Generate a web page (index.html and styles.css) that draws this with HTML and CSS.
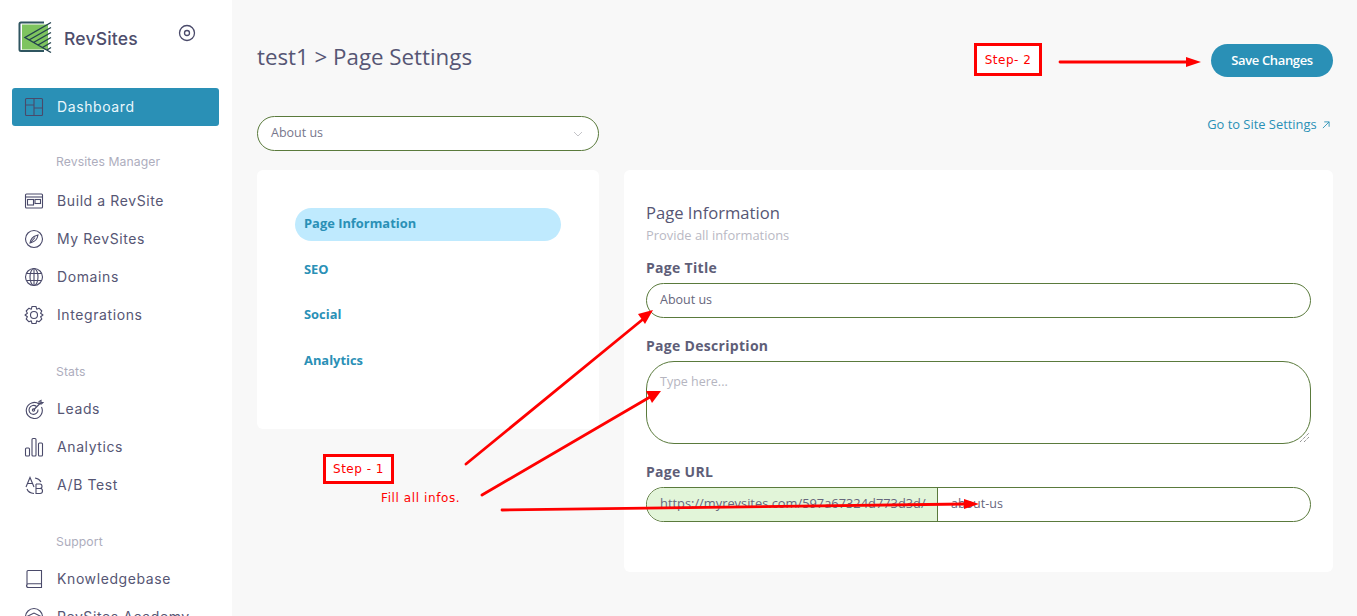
FILE: index.html
```html
<!DOCTYPE html>
<html lang="en">
<head>
<meta charset="utf-8">
<title>Page Settings</title>
<link rel="stylesheet" href="styles.css">
</head>
<body>
<div class="app">
  <aside class="sidebar">
    <div class="brand">
      <svg class="logo" width="34" height="33" viewBox="0 0 34 33">
        <path d="M26 1.500H3Q1.500 1.500 1.500 3V28.500Q1.500 30 3 30H26" fill="none" stroke="#2f5560" stroke-width="2"/>
        <path d="M4 3.500H30V28.500H4Z" fill="#7ec45f"/>
        <path d="M33 1.500L7 16.500L33 31.500M11 19L33 6.500M15.500 21.500L33 11.500M20 24L33 16.500M24.500 26.500L33 21.500M29 29L33 26.500" fill="none" stroke="#22424e" stroke-width="1.400"/>
      </svg>
      <span class="brand-name">RevSites</span>
      <svg class="target" width="18" height="18" viewBox="0 0 18 18" fill="none" stroke="#4a4a6a"><circle cx="9" cy="9" r="7.500" stroke-width="1.300"/><circle cx="9" cy="9" r="2.500" stroke-width="1.300"/></svg>
    </div>
    <a class="nav-item active">
      <svg class="ico" viewBox="0 0 20 20" fill="none" stroke="#4a4a6a" stroke-width="1.100"><rect x="1.500" y="1.500" width="17" height="17" rx="1"/><path d="M10 1.500V18.500M1.500 8H10M10 11H18.500"/></svg>
      Dashboard
    </a>
    <div class="nav-head first">Revsites Manager</div>
    <a class="nav-item">
      <svg class="ico" viewBox="0 0 20 20" fill="none" stroke="#4a4a6a" stroke-width="1.100"><rect x="1.500" y="3" width="17" height="14" rx="1"/><path d="M1.500 6H18.500"/><rect x="3.500" y="8.500" width="6" height="5.500"/><rect x="11" y="8.500" width="5.500" height="4"/></svg>
      Build a RevSite
    </a>
    <a class="nav-item">
      <svg class="ico" viewBox="0 0 20 20" fill="none" stroke="#4a4a6a" stroke-width="1.100"><circle cx="10" cy="10" r="8.500"/><path d="M14 6Q13 12 7.500 13.500L6 14Q7 8 12.500 6.500Z"/><path d="M6.500 13.500L11 8.500"/></svg>
      My RevSites
    </a>
    <a class="nav-item">
      <svg class="ico" viewBox="0 0 20 20" fill="none" stroke="#4a4a6a" stroke-width="1.100"><circle cx="10" cy="10" r="8.500"/><ellipse cx="10" cy="10" rx="4" ry="8.500"/><path d="M2.500 6.500H17.500M2.500 13.500H17.500M10 1.500V18.500"/></svg>
      Domains
    </a>
    <a class="nav-item">
      <svg class="ico" viewBox="0 0 20 20" fill="none" stroke="#4a4a6a" stroke-width="1.100"><circle cx="10" cy="10" r="3.500"/><path d="M8 1.500H12L12.700 4.200L15 3.200L17.800 6L16.600 8.300L19 10L16.600 11.700L17.800 14L15 16.800L12.700 15.800L12 18.500H8L7.300 15.800L5 16.800L2.200 14L3.400 11.700L1 10L3.400 8.300L2.200 6L5 3.200L7.300 4.200Z" stroke-linejoin="round"/></svg>
      Integrations
    </a>
    <div class="nav-head">Stats</div>
    <a class="nav-item">
      <svg class="ico" viewBox="0 0 20 20" fill="none" stroke="#4a4a6a" stroke-width="1.100"><path d="M15 5A8 8 0 1 0 17.500 8"/><path d="M12.500 7.500A4.500 4.500 0 1 0 14 10.500"/><circle cx="9.500" cy="11" r="1.200"/><path d="M9.500 11L17 3.500M15 2.500V5H17.500L19 3.500H17V1.500Z"/></svg>
      Leads
    </a>
    <a class="nav-item">
      <svg class="ico" viewBox="0 0 20 20" fill="none" stroke="#4a4a6a" stroke-width="1.100"><rect x="1.500" y="11" width="4" height="8" rx="1"/><rect x="8" y="1.500" width="4" height="17.500" rx="1"/><rect x="14.500" y="6" width="4" height="13" rx="1"/></svg>
      Analytics
    </a>
    <a class="nav-item">
      <svg class="ico" viewBox="0 0 20 20" fill="none" stroke="#4a4a6a" stroke-width="1.100"><path d="M2 12L6 2.500L10 12M3.500 8.500H8.500"/><path d="M12 9H16Q18 9 18 11.500Q18 13.500 16 13.500H12M12 13.500H16.500Q18.500 13.500 18.500 16Q18.500 18.500 16 18.500H12ZM12 9V18.500"/><path d="M3 14Q4.500 18 10 18.500M11 3Q15 3.500 17 7"/></svg>
      A/B Test
    </a>
    <div class="nav-head">Support</div>
    <a class="nav-item">
      <svg class="ico" viewBox="0 0 20 20" fill="none" stroke="#4a4a6a" stroke-width="1.100"><path d="M3 16.500V2.500Q3 1.500 4 1.500H17.500V18.500H4.500Q2.500 18.500 2.500 16.500Q2.500 14.800 4.500 14.800H17.500"/></svg>
      Knowledgebase
    </a>
    <a class="nav-item">
      <svg class="ico" viewBox="0 0 20 20" fill="none" stroke="#4a4a6a" stroke-width="1.100"><circle cx="10" cy="10" r="8.500"/><path d="M4 9L10 6L16 9L10 12Z"/></svg>
      RevSites Academy
    </a>
  </aside>

  <main class="main">
    <header class="page-head">
      <h1 class="page-title">test1 &gt; Page Settings</h1>
      <button class="save-btn">Save Changes</button>
    </header>

    <div class="select-row">
      <div class="select">
        <span>About us</span>
        <svg class="chev" width="10" height="6" viewBox="0 0 10 6" fill="none" stroke="#c4c4c8"><path d="M1 1L5 5L9 1"/></svg>
      </div>
      <a class="site-link">Go to Site Settings
        <svg width="8" height="8" viewBox="0 0 9 9" fill="none" stroke="#2a90b6"><path d="M1 8L8 1M2.500 1H8V6.500"/></svg>
      </a>
    </div>

    <div class="panels">
      <nav class="card tabs">
        <a class="tab current">Page Information</a>
        <a class="tab">SEO</a>
        <a class="tab">Social</a>
        <a class="tab">Analytics</a>
      </nav>
      <section class="card form">
        <h2 class="form-title">Page Information</h2>
        <p class="form-sub">Provide all informations</p>
        <label class="field-label">Page Title</label>
        <div class="input">About us</div>
        <label class="field-label">Page Description</label>
        <div class="input area">
          <span class="placeholder">Type here...</span>
          <svg class="grip" width="9" height="9" viewBox="0 0 9 9" stroke="#666" stroke-dasharray="1 1"><path d="M0 9L9 0M4 9L9 4"/></svg>
        </div>
        <label class="field-label">Page URL</label>
        <div class="input url">
          <span class="url-prefix">https://myrevsites.com/597a67324d773d3d/</span>
          <span class="url-slug">about-us</span>
        </div>
      </section>
    </div>
  </main>
</div>

<div class="note step2">Step- 2</div>
<div class="note step1">Step - 1</div>
<div class="note-text">Fill all infos.</div>
<svg class="arrows" width="1357" height="616" viewBox="0 0 1357 616" stroke="#f00" stroke-width="2.800" stroke-linecap="round" fill="#f00">
  <path d="M1060 62H1190" fill="none"/><path d="M1186 57L1201 62L1186 67Z" stroke="none"/>
  <path d="M466 464L642 320" fill="none"/><path d="M638 314L653 310L645 324Z" stroke="none"/>
  <path d="M482 495L650 397" fill="none"/><path d="M646 391L661 391L652 403Z" stroke="none"/>
  <path d="M502 510L965 504" fill="none"/><path d="M964 499L979 504L964 509Z" stroke="none"/>
</svg>
</body>
</html>
```
FILE: styles.css
```css
* { box-sizing: border-box; }
html, body { margin: 0; height: 616px; overflow: hidden; }
body { position: relative; background: #f8f8f8; font-family: "Open Sans", sans-serif; color: #565674; }
.app { display: flex; height: 616px; overflow: hidden; }

.sidebar { width: 232px; flex: none; background: #fff; padding: 0 13px 0 12px; font-family: Inter, sans-serif; overflow: hidden; }
.brand { display: flex; align-items: center; height: 88px; padding: 0 0 12px 6px; position: relative; }
.logo { flex: none; margin-top: -2px; }
.brand-name { margin-left: 12px; font-size: 17.500px; font-weight: 500; color: #4e4e6c; letter-spacing: .2px; }
.target { position: absolute; left: 166px; top: 24px; }
.nav-item { display: flex; align-items: center; height: 38px; padding: 0 0 2px 12px; font-size: 14px; color: #565674; letter-spacing: .6px; white-space: nowrap; }
.nav-item.active { background: #2a90b6; color: #e9f7fc; border-radius: 3px; }
.ico { width: 20px; height: 20px; margin-right: 13px; flex: none; margin-top: 2px; }
.nav-head { height: 38px; margin-top: 18px; padding: 12px 0 0 44px; font-size: 12.200px; color: #adadbd; letter-spacing: .1px; }
.nav-head.first { margin-top: 17px; padding-top: 0; height: 39px; line-height: 38px; }

.main { flex: 1; padding: 0 24px 0 25px; min-width: 0; }
.page-head { display: flex; justify-content: space-between; align-items: center; height: 116px; padding-bottom: 1px; }
.page-title { margin: 0 0 2px; font-size: 22.300px; font-weight: 400; color: #565674; }
.save-btn { width: 122px; height: 33px; margin-bottom: -6px; padding: 0 0 2px; border: 0; border-radius: 17px; background: #2a90b6; color: #fff; font: 600 13px "Open Sans", sans-serif; letter-spacing: -.35px; }

.select-row { display: flex; justify-content: space-between; height: 54px; }
.select { width: 342px; height: 35px; display: flex; justify-content: space-between; align-items: center; padding: 0 15px 2px 13px; background: #fff; border: 1px solid #5a7a3c; border-radius: 18px; font-size: 12.500px; color: #77778c; }
.chev { margin-top: 2px; }
.site-link { margin-top: -1px; padding-right: 3px; font-size: 12.900px; line-height: 18px; color: #2a90b6; }
.site-link svg { margin-left: 2px; }

.panels { display: grid; grid-template-columns: 342px 709px; gap: 25px; align-items: start; }
.card { background: #fff; border-radius: 6px; }
.tabs { height: 259px; padding: 38px; display: flex; flex-direction: column; gap: 12.500px; }
.tab { height: 33px; padding: 0 9px; border-radius: 17px; font-size: 12.900px; line-height: 31px; font-weight: 700; color: #2a90b6; }
.tab.current { background: #bfeafe; }

.form { height: 402px; padding: 32px 22px 0; }
.form-title { margin: 0; font-size: 16.600px; line-height: 22px; font-weight: 400; color: #565674; }
.form-sub { margin: 0 0 12px; font-size: 12.900px; line-height: 22px; color: #b9b9c4; }
.field-label { display: block; font-size: 14px; line-height: 20px; font-weight: 700; color: #5e5e78; letter-spacing: .3px; margin-bottom: 5px; }
.input { height: 35px; margin-bottom: 18px; padding: 0 13px 2px; display: flex; align-items: center; background: #fff; border: 1px solid #5a7a3c; border-radius: 18px; font-size: 12.500px; color: #66667c; }
.area { height: 83px; border-radius: 28px; align-items: flex-start; padding-top: 11px; position: relative; margin-bottom: 18px; }
.placeholder { color: #b5b5bf; }
.grip { position: absolute; right: 1px; bottom: 1px; }
.url { padding: 0; overflow: hidden; margin-bottom: 0; }
.url-prefix { width: 291px; height: 100%; flex: none; padding-left: 13px; font-size: 12.850px; line-height: 31px; background: #e2f5d9; border-right: 1px solid #5a7a3c; white-space: nowrap; overflow: hidden; }
.url-slug { padding-left: 13px; padding-bottom: 2px; }

.note { position: absolute; display: flex; align-items: center; justify-content: center; background: #fff; border: 3px solid #f00; color: #f00; font: 12px "DejaVu Sans", sans-serif; letter-spacing: .5px; }
.step2 { left: 974px; top: 43px; width: 68px; height: 33px; }
.step1 { left: 323px; top: 454px; width: 71px; height: 30px; }
.note-text { position: absolute; left: 381px; top: 489px; font: 12px/18px "DejaVu Sans", sans-serif; color: #f00; letter-spacing: .6px; }
.arrows { position: absolute; left: 0; top: 0; pointer-events: none; }
```
